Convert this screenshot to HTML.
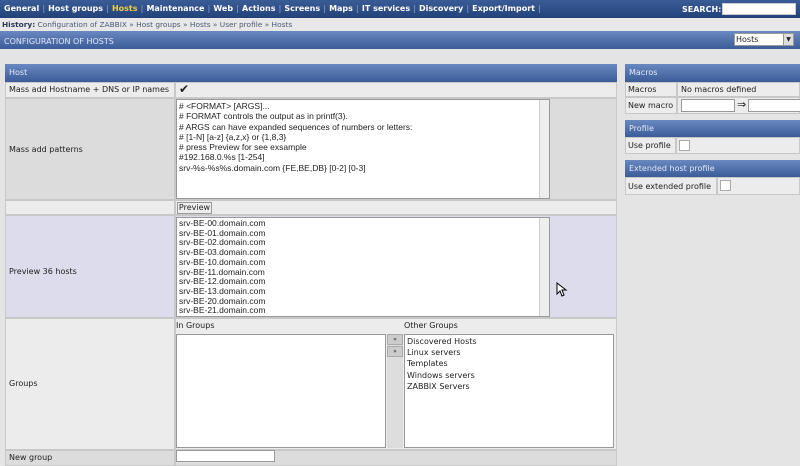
<!DOCTYPE html>
<html><head><style>
*{margin:0;padding:0;box-sizing:border-box}
body{width:800px;height:464px;overflow:hidden;background:#e4e4e4;font-family:"DejaVu Sans","Liberation Sans",sans-serif;font-size:8px;color:#222;position:relative}
.a{position:absolute;white-space:nowrap}
.nav{left:0;top:0;width:800px;height:18px;background:linear-gradient(#3a5c96,#23427a);color:#fff;font-weight:bold;font-size:8px;line-height:18px;padding-left:4px}
.nav span{margin-right:3px}
.nav i{font-style:normal;color:#7a90b8;margin-right:3px}
.hist{left:0;top:18px;width:800px;height:13px;background:#e8e8e8;line-height:13px;font-size:7.4px;padding-left:2px;color:#4a5a7a}
.bar{background:linear-gradient(#6a88c0,#3a5c98);color:#e0e8f8;line-height:17px;padding-left:4px;font-size:8px}
.cell{border:1px solid #c8c8c8}
.ta{background:#fff;border:1px solid #999;font-size:8px;line-height:10.3px;padding:1px 2px;white-space:pre;overflow:hidden}
.sb{background:#eee;border-left:1px solid #ccc}
.in{background:#fff;border:1px solid #999}
.cb{background:#fff;border:1px solid #aaa;width:11px;height:11px}
.l{line-height:14px;padding-left:3px}
</style></head><body>
<div class="a nav"><span>General</span><i>|</i><span>Host groups</span><i>|</i><span style="color:#f0d040">Hosts</span><i>|</i><span>Maintenance</span><i>|</i><span>Web</span><i>|</i><span>Actions</span><i>|</i><span>Screens</span><i>|</i><span>Maps</span><i>|</i><span>IT services</span><i>|</i><span>Discovery</span><i>|</i><span>Export/Import</span><i>|</i></div>
<div class="a" style="left:682px;top:5px;color:#fff;font-weight:bold;font-size:8px">SEARCH:</div>
<div class="a in" style="left:722px;top:3px;width:74px;height:12px;border-color:#ccc"></div>
<div class="a hist"><b style="color:#2a3a5a">History:</b> Configuration of ZABBIX » Host groups » Hosts » User profile » Hosts</div>
<div class="a bar" style="left:0;top:31px;width:800px;height:18px;line-height:22px">CONFIGURATION OF HOSTS</div>
<div class="a in" style="left:734px;top:33px;width:60px;height:13px;font-size:8px;line-height:11px;padding-left:1px">Hosts<div class="a" style="right:0;top:0;width:10px;height:11px;background:#ddd;border-left:1px solid #999;font-size:6px;text-align:center">▼</div></div>

<div class="a bar" style="left:5px;top:64px;width:612px;height:18px">Host</div>
<div class="a cell l" style="left:5px;top:82px;width:170px;height:16px;background:#ececec">Mass add Hostname + DNS or IP names</div>
<div class="a cell" style="left:175px;top:82px;width:442px;height:16px;background:#ececec;font-size:12px;line-height:13px;padding-left:3px">✔</div>
<div class="a cell l" style="left:5px;top:98px;width:170px;height:102px;background:#dcdcdc;padding-top:44px">Mass add patterns</div>
<div class="a cell" style="left:175px;top:98px;width:442px;height:102px;background:#dcdcdc"></div>
<div class="a ta" style="left:176px;top:99px;width:374px;height:100px;font-family:'Liberation Sans',sans-serif;font-size:8.5px"># &lt;FORMAT&gt; [ARGS]...
# FORMAT controls the output as in printf(3).
# ARGS can have expanded sequences of numbers or letters:
# [1-N] [a-z] {a,z,x} or {1,8,3}
# press Preview for see exsample
#192.168.0.%s [1-254]
srv-%s-%s%s.domain.com {FE,BE,DB} [0-2] [0-3]<div class="a sb" style="right:0;top:0;width:10px;height:98px"></div></div>
<div class="a cell" style="left:5px;top:200px;width:170px;height:15px;background:#ececec"></div>
<div class="a cell" style="left:175px;top:200px;width:442px;height:15px;background:#ececec"></div>
<div class="a" style="left:177px;top:202px;width:35px;height:12px;background:#eee;border:1px solid #999;font-size:8px;text-align:center;line-height:10px">Preview</div>
<div class="a cell l" style="left:5px;top:215px;width:170px;height:103px;background:#dcdcec;padding-top:49px">Preview 36 hosts</div>
<div class="a cell" style="left:175px;top:215px;width:442px;height:103px;background:#dcdcec"></div>
<div class="a ta" style="left:176px;top:217px;width:374px;height:100px;line-height:9.7px;font-family:'Liberation Sans',sans-serif;font-size:8.5px">srv-BE-00.domain.com
srv-BE-01.domain.com
srv-BE-02.domain.com
srv-BE-03.domain.com
srv-BE-10.domain.com
srv-BE-11.domain.com
srv-BE-12.domain.com
srv-BE-13.domain.com
srv-BE-20.domain.com
srv-BE-21.domain.com<div class="a sb" style="right:0;top:0;width:10px;height:98px"></div></div>
<svg class="a" style="left:556px;top:282px" width="12" height="16"><path d="M1 1 L1 12 L4 9 L6 14 L8 13 L6 8 L10 8 Z" fill="#fff" stroke="#000" stroke-width="1"/></svg>
<div class="a cell l" style="left:5px;top:318px;width:170px;height:132px;background:#ececec;padding-top:58px">Groups</div>
<div class="a cell" style="left:175px;top:318px;width:442px;height:132px;background:#ececec"></div>
<div class="a" style="left:176px;top:321px">In Groups</div>
<div class="a" style="left:404px;top:321px">Other Groups</div>
<div class="a in" style="left:176px;top:334px;width:210px;height:114px"></div>
<div class="a" style="left:387px;top:334px;width:16px;height:114px;background:#ddd"></div>
<div class="a" style="left:387px;top:334px;width:16px;height:11px;background:#ccc;border:1px solid #aaa;font-size:6px;text-align:center;line-height:9px">«</div>
<div class="a" style="left:387px;top:346px;width:16px;height:11px;background:#ccc;border:1px solid #aaa;font-size:6px;text-align:center;line-height:9px">»</div>
<div class="a in" style="left:404px;top:334px;width:210px;height:114px;padding:1px 2px;line-height:11.2px;font-size:8px">Discovered Hosts<br>Linux servers<br>Templates<br>Windows servers<br>ZABBIX Servers</div>
<div class="a cell l" style="left:5px;top:450px;width:170px;height:16px;background:#dcdcdc">New group</div>
<div class="a cell" style="left:175px;top:450px;width:442px;height:16px;background:#dcdcdc"></div>
<div class="a in" style="left:176px;top:450px;width:99px;height:12px"></div>

<div class="a bar" style="left:625px;top:64px;width:175px;height:18px">Macros</div>
<div class="a cell l" style="left:625px;top:82px;width:52px;height:15px;background:#ececec;padding-left:2px">Macros</div>
<div class="a cell l" style="left:677px;top:82px;width:123px;height:15px;background:#ececec">No macros defined</div>
<div class="a cell l" style="left:625px;top:97px;width:52px;height:17px;background:#ececec;padding-left:2px;line-height:16px">New macro</div>
<div class="a cell" style="left:677px;top:97px;width:123px;height:17px;background:#ececec"></div>
<div class="a in" style="left:681px;top:99px;width:54px;height:13px"></div>
<div class="a" style="left:737px;top:98px;font-size:11px">⇒</div>
<div class="a in" style="left:748px;top:99px;width:60px;height:13px"></div>
<div class="a bar" style="left:625px;top:120px;width:175px;height:17px">Profile</div>
<div class="a cell l" style="left:625px;top:137px;width:51px;height:17px;background:#ececec;padding-left:2px;line-height:16px">Use profile</div>
<div class="a cell" style="left:676px;top:137px;width:124px;height:17px;background:#ececec"></div>
<div class="a cb" style="left:679px;top:140px"></div>
<div class="a bar" style="left:625px;top:160px;width:175px;height:17px">Extended host profile</div>
<div class="a cell l" style="left:625px;top:177px;width:92px;height:18px;background:#ececec;padding-left:2px;line-height:17px">Use extended profile</div>
<div class="a cell" style="left:717px;top:177px;width:83px;height:18px;background:#ececec"></div>
<div class="a cb" style="left:720px;top:180px"></div>
</body></html>
